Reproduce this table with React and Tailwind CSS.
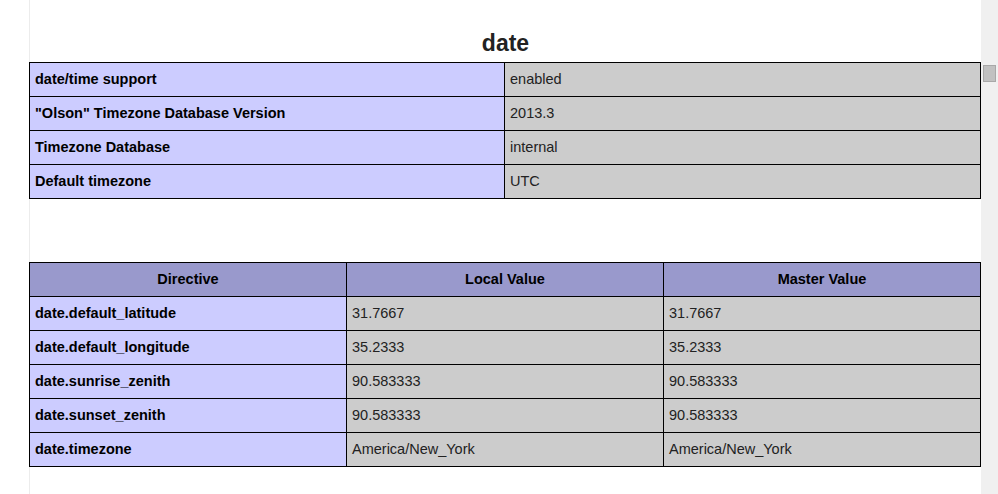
import React from 'react';

const summary = [
  ['date/time support', 'enabled'],
  ['"Olson" Timezone Database Version', '2013.3'],
  ['Timezone Database', 'internal'],
  ['Default timezone', 'UTC'],
];

const directives = [
  ['date.default_latitude', '31.7667', '31.7667'],
  ['date.default_longitude', '35.2333', '35.2333'],
  ['date.sunrise_zenith', '90.583333', '90.583333'],
  ['date.sunset_zenith', '90.583333', '90.583333'],
  ['date.timezone', 'America/New_York', 'America/New_York'],
];

const cell = 'h-[34px] flex items-center px-[5px] border-r border-b border-black';

const App = () => {
  return (
    <div
      className="w-[998px] h-[494px] overflow-hidden flex bg-white text-[14.5px] text-[#222]"
      style={{ fontFamily: '"Liberation Sans", Arial, sans-serif' }}
    >
      {/* Page */}
      <div className="w-[981px] pl-[29px]">
        <div className="w-[952px] h-full border-l border-[#ececec]">
          {/* Title */}
          <h2 className="pt-[32px] text-center text-[23px] leading-[23px] font-bold text-[#222]">
            date
          </h2>

          {/* Summary table */}
          <div className="mt-[7px] -ml-px grid grid-cols-[475px_476px] border-l border-t border-black">
            {summary.map(([k, v]) => (
              <React.Fragment key={k}>
                <div className={`${cell} bg-[#ccccff] font-bold text-black`}>{k}</div>
                <div className={`${cell} bg-[#cccccc]`}>{v}</div>
              </React.Fragment>
            ))}
          </div>

          {/* Directives table */}
          <div className="mt-[63px] -ml-px grid grid-cols-[317px_317px_317px] border-l border-t border-black">
            <div className={`${cell} justify-center bg-[#9999cc] font-bold text-black`}>Directive</div>
            <div className={`${cell} justify-center bg-[#9999cc] font-bold text-black`}>Local Value</div>
            <div className={`${cell} justify-center bg-[#9999cc] font-bold text-black`}>Master Value</div>
            {directives.map(([k, local, master]) => (
              <React.Fragment key={k}>
                <div className={`${cell} bg-[#ccccff] font-bold text-black`}>{k}</div>
                <div className={`${cell} bg-[#cccccc]`}>{local}</div>
                <div className={`${cell} bg-[#cccccc]`}>{master}</div>
              </React.Fragment>
            ))}
          </div>
        </div>
      </div>

      {/* Scrollbar */}
      <div className="relative w-[17px] h-full bg-[#f0f0f0]">
        <div className="absolute left-[2px] top-[65px] w-[13px] h-[17px] bg-[#c1c1c1] border border-[#a8a8a8]" />
      </div>
    </div>
  );
};

export default App;
